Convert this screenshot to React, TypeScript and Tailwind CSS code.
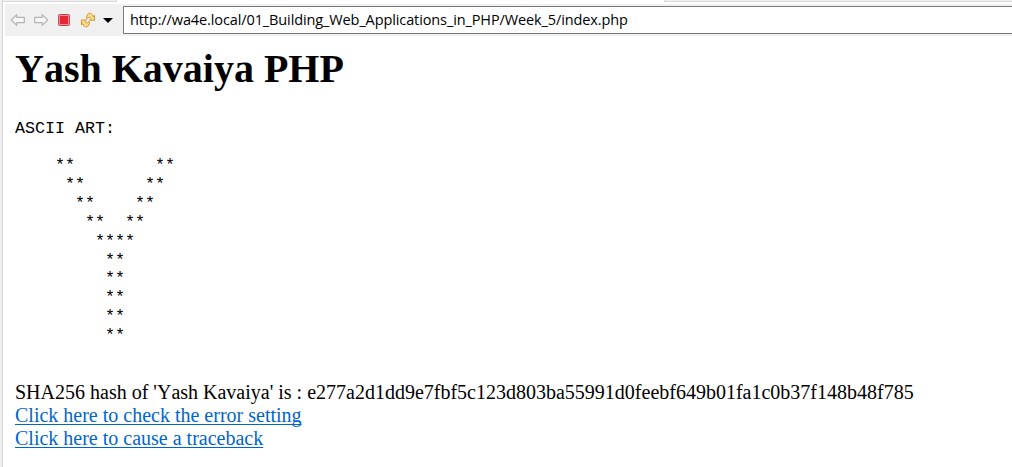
const ART = [
  "    **        **",
  "     **      **",
  "      **    **",
  "       **  **",
  "        ****",
  "         **",
  "         **",
  "         **",
  "         **",
  "         **",
].join("\n");

function Arrow({ flip = false }: { flip?: boolean }) {
  return (
    <svg width="16" height="16" viewBox="0 0 16 16" className={flip ? "-scale-x-100" : ""}>
      <path
        d="M1.3 8 6.8 2.6V5.4H14.3V10.6H6.8V13.4Z"
        fill="#f6f6f6"
        stroke="#b3b3b3"
        strokeWidth="1.2"
        strokeLinejoin="round"
      />
    </svg>
  );
}

function Toolbar() {
  return (
    <div className="ml-[2px] flex h-8 shrink-0 items-start bg-[#f0f0f0]">
      <div className="flex w-[118px] shrink-0 items-center pt-2 pl-[5px]">
        <Arrow />
        <div className="w-[7px]" />
        <Arrow flip />
        <svg width="12" height="12" viewBox="0 0 12 12" className="ml-[9px]">
          <rect x="0.5" y="0.5" width="11" height="11" rx="1" fill="#f28a90" stroke="#bd4a52" />
          <rect x="2" y="2" width="8" height="8" fill="#e32636" />
        </svg>
        <svg width="16" height="16" viewBox="0 0 16 16" className="ml-[10px]">
          <g fill="#fbe08a" stroke="#cf9430" strokeWidth="1" strokeLinejoin="round">
            <path d="M14.5 3.2V8.2H9.5L11.2 6.5C10.3 5.2 9 4.8 8 5.8L6.8 6.6C6.2 4.2 7.4 1.6 9.6 1.3C11.2 1.1 12.2 2.6 13 4.6Z" />
            <path d="M1.5 13V8H6.5L4.8 9.7C5.7 11 7 11.4 8 10.4L9.2 9.6C9.8 12 8.6 14.6 6.4 14.9C4.8 15.1 3.8 13.6 3 11.6Z" />
          </g>
        </svg>
        <svg width="10" height="5" viewBox="0 0 10 5" className="ml-[7px]">
          <path d="M0 0H10L5 5Z" fill="#000" />
        </svg>
      </div>
      <div className="mt-[2px] flex h-7 min-w-0 flex-1 items-center border border-r-0 border-[#7a7a7a] bg-white pl-[6px]">
        <span className="font-['Open_Sans','Noto_Sans',sans-serif] text-[14.5px] leading-[20px] tracking-[-0.11px] whitespace-nowrap text-black">
          http://wa4e.local/01_Building_Web_Applications_in_PHP/Week_5/index.php
        </span>
      </div>
    </div>
  );
}

export default function App() {
  return (
    <div className="flex h-[467px] w-full overflow-hidden bg-white">
      <div className="w-[3px] shrink-0 border-r border-[#d5d5d5] bg-[#f0f0f0]" />
      <div className="flex min-w-0 flex-1 flex-col">
        <div className="flex h-1 shrink-0 justify-between">
          <div className="h-[2px] w-[114px] border-r border-b border-[#d9d9d9] bg-[#f0f0f0]" />
          <div className="h-[2px] w-[348px] border-b border-l border-[#d9d9d9] bg-[#f0f0f0]" />
        </div>
        <Toolbar />
        <main className="pl-3 font-['Liberation_Serif',serif] text-[20px] leading-[23px] text-black [font-kerning:none]">
          <h1 className="mt-[10px] text-[40px] leading-[46px] font-bold">Yash Kavaiya PHP</h1>
          <pre className="mt-[27px] font-['Liberation_Mono',monospace] text-[16.67px] leading-[19px]">ASCII ART:</pre>
          <pre className="mt-[19px] font-['Liberation_Mono',monospace] text-[16.67px] leading-[18.9px]">{ART}</pre>
          <p className="mt-[35px] whitespace-nowrap">
            SHA256 hash of 'Yash Kavaiya' is : e277a2d1dd9e7fbf5c123d803ba55991d0feebf649b01fa1c0b37f148b48f785
          </p>
          <div>
            <a href="#errors" className="text-[#0066cc] underline decoration-1 underline-offset-2 [text-decoration-skip-ink:none]">Click here to check the error setting</a>
          </div>
          <div>
            <a href="#traceback" className="text-[#0066cc] underline decoration-1 underline-offset-2 [text-decoration-skip-ink:none]">Click here to cause a traceback</a>
          </div>
        </main>
      </div>
    </div>
  );
}
